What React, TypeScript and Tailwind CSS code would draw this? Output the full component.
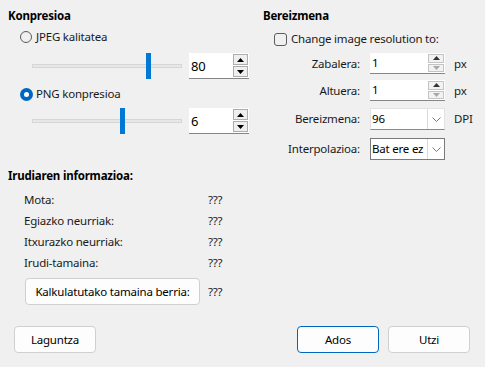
import React from "react";

function UpArrow({ color = "#000" }: { color?: string }) {
  return (
    <svg width="7" height="4" viewBox="0 0 7 4">
      <path d="M0 4 L3.5 0 L7 4Z" fill={color} />
    </svg>
  );
}
function DownArrow({ color = "#000" }: { color?: string }) {
  return (
    <svg width="7" height="4" viewBox="0 0 7 4">
      <path d="M0 0 L3.5 4 L7 0Z" fill={color} />
    </svg>
  );
}
function Chevron() {
  return (
    <svg width="9" height="5" viewBox="0 0 9 5">
      <path d="M0.5 0.5 L4.5 4.5 L8.5 0.5" fill="none" stroke="#777" strokeWidth="1" />
    </svg>
  );
}

function Slider({ thumb }: { thumb: number }) {
  return (
    <div className="relative w-[150px] h-[26px] flex items-center">
      <div className="w-full h-[4px] bg-[#e7e7e7] border border-[#d6d6d6]" />
      <div className="absolute top-0 w-[5px] h-[26px] bg-[#0078d4]" style={{ left: thumb }} />
    </div>
  );
}

function LeftSpin({ value }: { value: string }) {
  return (
    <div className="flex w-[60px] h-[26px] bg-white border-b border-[#868686]">
      <div className="flex-1 pl-[2px] leading-[26px] text-[13px] tracking-[-0.3px] text-black">{value}</div>
      <div className="flex flex-col w-[15px] py-[1px] mr-[1px] gap-[1px]">
        <div className="flex-1 border border-[#adadad] bg-[#efefef] flex items-center justify-center">
          <UpArrow />
        </div>
        <div className="flex-1 border border-[#adadad] bg-[#efefef] flex items-center justify-center">
          <DownArrow />
        </div>
      </div>
    </div>
  );
}

function RightSpin({ value }: { value: string }) {
  return (
    <div className="flex w-[75px] h-[21px] bg-white border-b border-[#868686]">
      <div className="flex-1 pl-[2px] leading-[20px] text-black">{value}</div>
      <div className="flex flex-col w-[16px] py-[1px] mr-[1px] gap-[1px]">
        <div className="flex-1 border border-[#c4c4c4] bg-[#f2f2f2] flex items-center justify-center">
          <UpArrow color="#333" />
        </div>
        <div className="flex-1 border border-[#c4c4c4] bg-[#f2f2f2] flex items-center justify-center">
          <DownArrow color="#a8a8a8" />
        </div>
      </div>
    </div>
  );
}

function SelectBox({ value, dark }: { value: string; dark?: boolean }) {
  return (
    <div
      className={
        dark
          ? "flex w-[75px] h-[22px] bg-white border border-[#7a7a7a]"
          : "flex w-[75px] h-[22px] bg-white border border-[#e3e3e3] border-b-[#8a8a8a]"
      }
    >
      <div className="flex-1 pl-[1px] leading-[20px] text-black whitespace-nowrap overflow-hidden">{value}</div>
      <div className="w-[17px] border-l border-[#d9d9d9] flex items-center justify-center">
        <Chevron />
      </div>
    </div>
  );
}

function Button({ children, primary, w }: { children: React.ReactNode; primary?: boolean; w: string }) {
  return (
    <div
      className={
        "h-[27px] rounded-[4px] bg-[#fdfdfd] flex items-center justify-center text-black " +
        w +
        (primary ? " border border-[#0067c0]" : " border border-[#d0d0d0]")
      }
    >
      {children}
    </div>
  );
}

function FormRow({ label, children, unit, top }: { label: string; children: React.ReactNode; unit?: string; top: string }) {
  return (
    <div className={"flex items-center " + top}>
      <div className="w-[97px] text-right text-[#1a1a1a]">{label}</div>
      <div className="ml-[10px]">{children}</div>
      {unit && <div className="ml-[9px] text-[#1a1a1a]">{unit}</div>}
    </div>
  );
}

export default function App() {
  return (
    <div className="w-[485px] h-[367px] bg-[#f0f0f0] font-['Noto_Sans',sans-serif] text-[11.5px] tracking-[-0.2px] leading-[16px] text-[#1a1a1a] overflow-hidden flex flex-col">
      <div className="flex">
        {/* left column */}
        <div className="w-[255px] pl-[8px] pt-[8px] flex flex-col">
          <div className="h-[16px] font-bold text-black">Konpresioa</div>
          <div className="mt-[5px] h-[16px] flex items-center pl-[12px]">
            <div className="w-[12px] h-[12px] rounded-full border border-[#5c5c5c]" />
            <div className="ml-[4px]">JPEG kalitatea</div>
          </div>
          <div className="mt-[8px] flex items-center pl-[24px]">
            <Slider thumb={114} />
            <div className="ml-[7px]">
              <LeftSpin value="80" />
            </div>
          </div>
          <div className="mt-[7px] h-[16px] flex items-center pl-[12px]">
            <div className="w-[13px] h-[13px] rounded-full bg-[#0067c0] flex items-center justify-center">
              <div className="w-[5px] h-[5px] rounded-full bg-white" />
            </div>
            <div className="ml-[3px]">PNG konpresioa</div>
          </div>
          <div className="mt-[6px] flex items-center pl-[24px]">
            <Slider thumb={88} />
            <div className="ml-[7px]">
              <LeftSpin value="6" />
            </div>
          </div>
        </div>
        {/* right column */}
        <div className="flex-1 pl-[8px] pt-[8px] flex flex-col">
          <div className="h-[16px] font-bold text-black">Bereizmena</div>
          <div className="mt-[7px] h-[16px] flex items-center pl-[11px]">
            <div className="w-[13px] h-[13px] rounded-[3px] border border-[#5c5c5c]" />
            <div className="ml-[4px]">Change image resolution to:</div>
          </div>
          <FormRow label="Zabalera:" unit="px" top="mt-[6px]">
            <RightSpin value="1" />
          </FormRow>
          <FormRow label="Altuera:" unit="px" top="mt-[6px]">
            <RightSpin value="1" />
          </FormRow>
          <FormRow label="Bereizmena:" unit="DPI" top="mt-[7px]">
            <SelectBox value="96" />
          </FormRow>
          <FormRow label="Interpolazioa:" top="mt-[8px]">
            <SelectBox value="Bat ere ez" dark />
          </FormRow>
        </div>
      </div>

      {/* info */}
      <div className="pl-[8px] mt-[8px] flex flex-col">
        <div className="h-[16px] font-bold text-black">Irudiaren informazioa:</div>
        <div className="mt-[5px] flex flex-col pl-[16px]">
          {["Mota:", "Egiazko neurriak:", "Itxurazko neurriak:", "Irudi-tamaina:"].map((l) => (
            <div key={l} className="h-[21px] leading-[21px] flex">
              <div className="w-[184px]">{l}</div>
              <div>???</div>
            </div>
          ))}
          <div className="mt-[5px] flex items-center">
            <Button w="w-[175px] ml-[1px]">Kalkulatutako tamaina berria:</Button>
            <div className="ml-[8px]">???</div>
          </div>
        </div>
      </div>

      {/* bottom buttons */}
      <div className="mt-[21px] flex pl-[14px] pr-[15px]">
        <Button w="w-[82px]">Laguntza</Button>
        <div className="flex-1" />
        <Button w="w-[82px]" primary>
          Ados
        </Button>
        <div className="w-[9px]" />
        <Button w="w-[82px]">Utzi</Button>
      </div>
    </div>
  );
}
